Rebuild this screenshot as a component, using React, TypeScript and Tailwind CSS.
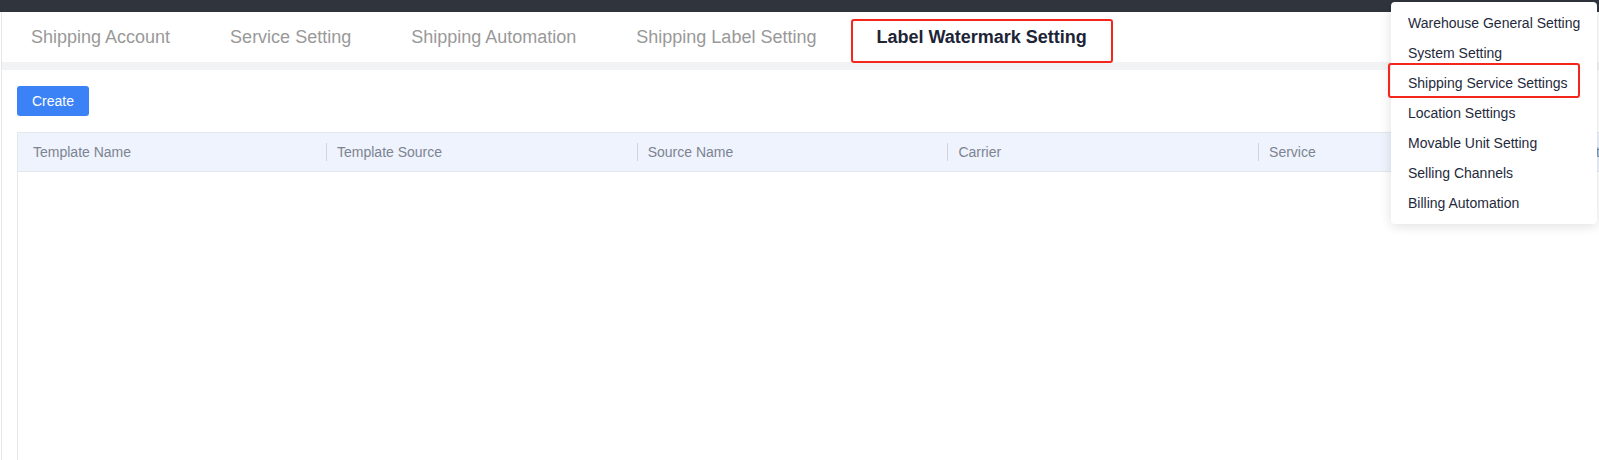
import React from "react";

const tabs = [
  "Shipping Account",
  "Service Setting",
  "Shipping Automation",
  "Shipping Label Setting",
  "Label Watermark Setting",
];

const columns = [
  "Template Name",
  "Template Source",
  "Source Name",
  "Carrier",
  "Service",
  "Action",
];

const menu = [
  "Warehouse General Setting",
  "System Setting",
  "Shipping Service Settings",
  "Location Settings",
  "Movable Unit Setting",
  "Selling Channels",
  "Billing Automation",
];

export default function App() {
  return (
    <div
      className="relative w-[1599px] h-[460px] overflow-hidden bg-white flex flex-col"
      style={{ fontFamily: '"Liberation Sans", Arial, sans-serif' }}
    >
      <div className="h-[12px] shrink-0 bg-[#30343c]" />
      <div className="ml-[1px] flex-1 flex flex-col border-l border-[#e6e7ea] min-h-0">
        <div className="h-[50px] shrink-0 flex items-center -ml-px">
          {tabs.map((t, i) => (
            <div
              key={t}
              className={
                i === tabs.length - 1
                  ? "px-[30px] text-[18px] font-bold text-[#1c2436] whitespace-nowrap"
                  : "px-[30px] text-[18px] text-[#999999] whitespace-nowrap"
              }
            >
              {t}
            </div>
          ))}
        </div>
        <div className="h-[8px] shrink-0 bg-[#f2f3f5]" />
        <div className="flex-1 flex flex-col pl-[15px] pt-[16px] min-h-0">
          <button className="w-[72px] h-[30px] shrink-0 rounded-[3px] bg-[#3b82f6] text-white text-[14px] leading-none">
            Create
          </button>
          <div className="mt-[16px] flex-1 flex flex-col border-l border-t border-[#e4e7ec] w-[1880px]">
            <div className="h-[39px] flex bg-[#eef3fd] border-b border-[#e4e7ec] text-[14px] text-[#7d8391]">
              {columns.map((c, i) => (
                <div
                  key={c}
                  className={
                    i === 0
                      ? "w-[303px] shrink-0 flex items-center"
                      : "w-[310.7px] shrink-0 flex items-center"
                  }
                >
                  {i === 0 ? (
                    <span className="ml-[15px] whitespace-nowrap">{c}</span>
                  ) : (
                    <>
                      <span className="ml-[5px] w-px h-[18px] bg-[#cfd3da]" />
                      <span className="ml-[10px] whitespace-nowrap">{c}</span>
                    </>
                  )}
                </div>
              ))}
            </div>
            <div className="flex-1" />
          </div>
        </div>
      </div>

      {/* Dropdown menu */}
      <div className="absolute top-[2px] left-[1391px] w-[206px] rounded-[4px] bg-white py-[6px] shadow-[0_2px_12px_rgba(0,0,0,0.13)]">
        {menu.map((m) => (
          <div
            key={m}
            className="h-[30px] flex items-center pl-[17px] text-[14px] text-[#1f2a3c] whitespace-nowrap"
          >
            {m}
          </div>
        ))}
      </div>

      {/* Red annotation boxes */}
      <div className="absolute left-[851px] top-[19px] w-[262px] h-[44px] border-2 border-[#f5261b] rounded-[3px]" />
      <div className="absolute left-[1388px] top-[63px] w-[192px] h-[35px] border-2 border-[#f5261b] rounded-[3px]" />
    </div>
  );
}
